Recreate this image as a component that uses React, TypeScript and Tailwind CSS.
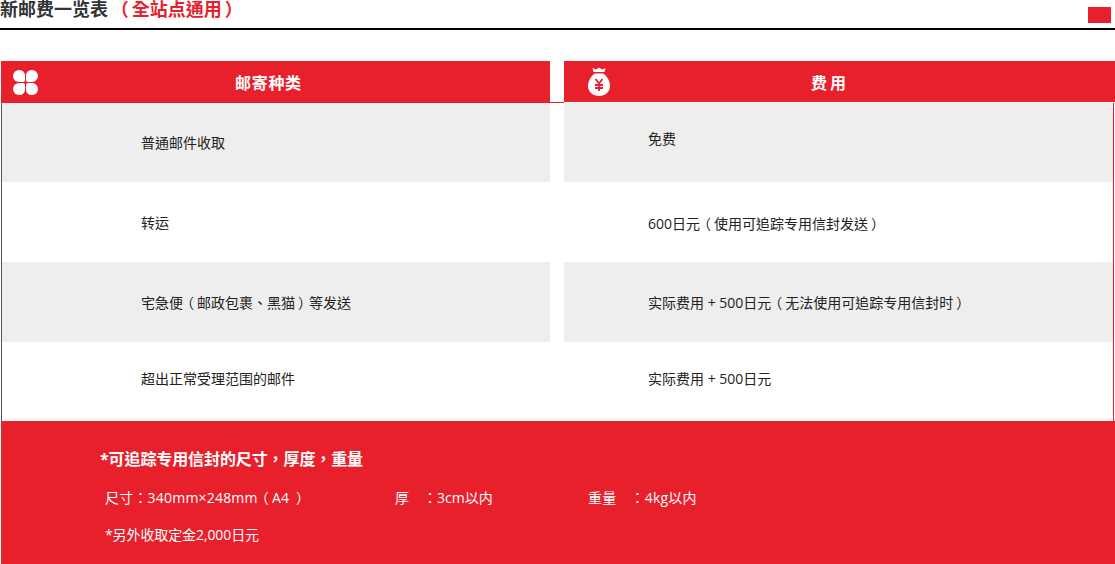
const font = "font-['Open_Sans','Noto_Sans_CJK_TC','Noto_Sans_CJK_SC',sans-serif]";

const rows = [
  { name: "普通邮件收取", fee: "免费", h: "h-[79px]", nameOffset: "", feeOffset: "-mt-2" },
  { name: "转运", fee: "600日元（使用可追踪专用信封发送）", h: "h-[80px]", nameOffset: "", feeOffset: "mt-[3px]" },
  { name: "宅急便（邮政包裹、黑猫）等发送", fee: "实际费用 + 500日元（无法使用可追踪专用信封时）", h: "h-[80px]", nameOffset: "", feeOffset: "" },
  { name: "超出正常受理范围的邮件", fee: "实际费用 + 500日元", h: "h-[79px]", nameOffset: "-mt-[6px]", feeOffset: "-mt-[6px]" },
];

// full-width brackets sit centred in the reference font, Noto pushes them to one side
function Text({ children }: { children: string }) {
  const parts = children.split(/([（）])/);
  return (
    <>
      {parts.map((part, i) =>
        part === "（" ? (
          <span key={i} className="-ml-[3px] mr-[3px]">（</span>
        ) : part === "）" ? (
          <span key={i} className="ml-[3px] -mr-[3px]">）</span>
        ) : (
          part
        ),
      )}
    </>
  );
}

function CloverIcon() {
  return (
    <svg width="25" height="25" viewBox="0 0 25 25" fill="#fff">
      <path d="M6 0h.500a5.500 5.500 0 0 1 5.500 5.500V10a2 2 0 0 1-2 2H6A6 6 0 0 1 6 0z" />
      <path d="M19 0h-.500A5.500 5.500 0 0 0 13 5.500V10a2 2 0 0 0 2 2h4a6 6 0 0 0 0-12z" />
      <path d="M6 25h.500a5.500 5.500 0 0 0 5.500-5.500V15a2 2 0 0 0-2-2H6a6 6 0 0 0 0 12z" />
      <path d="M19 25h-.500a5.500 5.500 0 0 1-5.500-5.500V15a2 2 0 0 1 2-2h4a6 6 0 0 1 0 12z" />
    </svg>
  );
}

function MoneyBagIcon() {
  return (
    <svg width="22" height="29" viewBox="0 0 22 29">
      <path d="M4.500 1 8 2.500 11 .5l3 2 3.500-1.500-1 4h-11z" fill="#fff" />
      <path d="M7 6.500h8c4 2.500 7 7.500 7 12.500 0 6-5 10-11 10S0 25 0 19C0 14 3 9 7 6.500z" fill="#fff" />
      <path d="M7.500 12l3.500 4.500 3.500-4.500M11 16.500V24M7 18h8M7 21h8" fill="none" stroke="#e8202c" strokeWidth="1.800" />
    </svg>
  );
}

export default function App() {
  return (
    <div className={`h-[564px] w-[1115px] overflow-hidden bg-white ${font}`}>
      <div className="flex h-[30px] justify-between border-b-2 border-black">
        <h1 className="text-[18px] leading-[18px] font-bold whitespace-pre text-[#333]">
          新邮费一览表 <span className="ml-px text-[#e8202c]"><Text>（全站点通用）</Text></span>
        </h1>
        <div className="mt-[7px] mr-1 h-4 w-[23px] bg-[#e8202c]" />
      </div>

      <div className="mt-[31px] ml-[1px] flex">
        <div className="flex h-[42px] w-[549px] items-center bg-[#e8202c] pl-3 text-white">
          <CloverIcon />
          <span className="mt-[2px] ml-[197px] text-[16px] font-bold tracking-[0.7px]">邮寄种类</span>
        </div>
        <div className="flex h-[42px] w-[14px] items-end">
          <div className="h-px w-full bg-[#e8202c]" />
        </div>
        <div className="flex h-[41px] flex-1 items-center bg-[#e8202c] pl-6 text-white">
          <MoneyBagIcon />
          <span className="mt-[2px] ml-[201px] text-[16px] font-bold tracking-[3px]">费用</span>
        </div>
      </div>

      <div className="mr-[1px] ml-[1px] border-r border-l border-r-[#e8202c] border-l-[#555]">
        {rows.map((row, i) => (
          <div key={row.name} className={`flex ${row.h} text-[14px] whitespace-nowrap text-[#222]`}>
            <div className={`flex w-[548px] items-center pl-[139px] ${i % 2 === 0 ? "bg-[#eee]" : ""}`}>
              <span className={row.nameOffset}><Text>{row.name}</Text></span>
            </div>
            <div className="w-[14px]" />
            <div className={`flex flex-1 items-center pl-[84px] ${i % 2 === 0 ? "bg-[#eee]" : ""}`}>
              <span className={row.feeOffset}><Text>{row.fee}</Text></span>
            </div>
          </div>
        ))}
      </div>

      <div className="ml-[1px] h-[143px] bg-[#e8202c] pt-[28px] text-white">
        <div className="pl-[99px] text-[16px] leading-5 font-bold tracking-[-0.1px]">*可追踪专用信封的尺寸，厚度，重量</div>
        <div className="mt-[19px] flex pl-[104px] text-[14px] leading-5">
          <span className="w-[290px] tracking-[0.2px] whitespace-pre"><Text>尺寸：340mm×248mm（A4 ）</Text></span>
          <span className="w-[193px]">厚　：3cm以内</span>
          <span className="tracking-[0.2px]">重量　：4kg以内</span>
        </div>
        <div className="mt-[17px] pl-[104px] text-[14px] leading-5 tracking-[-0.1px]">*另外收取定金2,000日元</div>
      </div>
    </div>
  );
}
